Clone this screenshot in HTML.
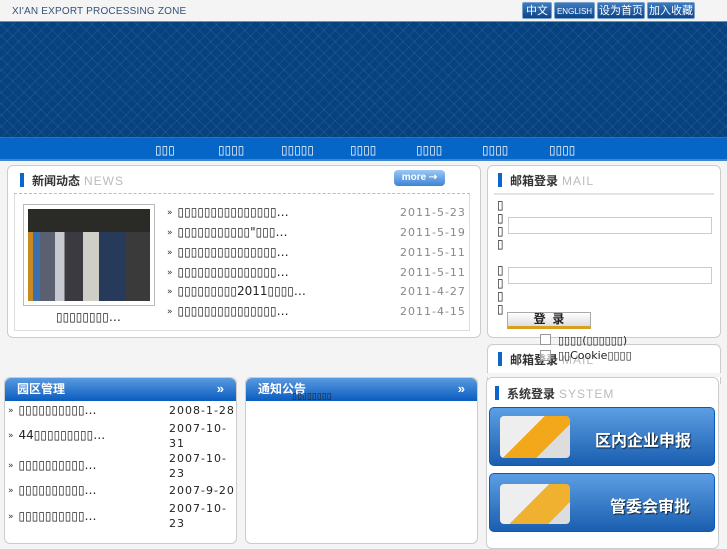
<!DOCTYPE html>
<html><head><meta charset="utf-8"><style>
*{margin:0;padding:0;box-sizing:border-box}
body{width:727px;height:545px;overflow:hidden;background:#f4f4f4;font-family:"DejaVu Sans","Liberation Sans","Noto Sans CJK SC",sans-serif;font-size:11px;color:#222;position:relative}
.a{position:absolute}
.tb{top:2px;height:17px;background:linear-gradient(#3c7ac0,#0d4488);color:#fff;font-size:11px;line-height:17px;text-align:center;border:1px solid #7aa0cc;border-radius:2px;font-family:"Liberation Sans","Noto Sans CJK SC",sans-serif}
.banner{top:21px;left:0;width:727px;height:117px;background-color:#07427f;background-image:repeating-linear-gradient(45deg,rgba(120,170,230,.12) 0 1px,transparent 1px 8px),repeating-linear-gradient(-45deg,rgba(120,170,230,.12) 0 1px,transparent 1px 8px);border-top:1px solid #6d8fb8;border-bottom:1px solid #4a6a90}
.nav{top:138px;left:0;width:727px;height:23px;background:#0566c8;border-bottom:2px solid #3f86d0}
.nav span{position:absolute;top:5px;color:#fff;font-size:12px}
.panel{background:#fff;border:1px solid #ccc;border-radius:6px}
.tt{font-weight:bold;font-size:12px;color:#333;font-family:"Liberation Sans","Noto Sans CJK SC",sans-serif}
.tt i{display:inline-block;width:4px;height:14px;background:#0a66cc;vertical-align:-2px;margin-right:8px}
.tt em{font-style:normal;font-weight:normal;color:#bbb;letter-spacing:1px;margin-left:4px}
.li{position:absolute;font-size:12px;white-space:nowrap}
.li:before{content:"»";font-size:9px;color:#333;margin-right:5px;vertical-align:1px}
.dt{position:absolute;color:#888;font-size:11px;letter-spacing:1px}
.dt2{position:absolute;color:#222;font-size:11px;letter-spacing:1px;line-height:15px}
.hd{height:23px;border-radius:6px 6px 0 0;background:linear-gradient(#5a9ae0,#0a5cc0);color:#fff;font-weight:bold;font-size:12px;line-height:22px;padding-left:12px;font-family:"Liberation Sans","Noto Sans CJK SC",sans-serif;position:relative}
.hd b{position:absolute;right:12px;top:0;font-size:13px}
.sb{left:489px;width:226px;height:59px;border-radius:5px;background:linear-gradient(#5c9ee2,#1a5fb0);border:1px solid #0a58c0;color:#fff;font-weight:bold;font-size:16px;font-family:"Liberation Sans","Noto Sans CJK SC",sans-serif;text-shadow:1px 1px 1px #123}
.inp{position:absolute;left:508px;width:204px;height:17px;border:1px solid #ccc;background:#fff}
</style></head><body>
<div class="a" style="left:12px;top:6px;font-size:10px;color:#35507a;font-family:'Liberation Sans',sans-serif;letter-spacing:.2px">XI'AN EXPORT PROCESSING ZONE</div>
<div class="a tb" style="left:522px;width:30px">中文</div>
<div class="a tb" style="left:554px;width:41px;font-size:8px">ENGLISH</div>
<div class="a tb" style="left:597px;width:48px">设为首页</div>
<div class="a tb" style="left:647px;width:48px">加入收藏</div>
<div class="a banner"></div>
<div class="a nav"><span style="left:155px">▯▯▯</span><span style="left:218px">▯▯▯▯</span><span style="left:281px">▯▯▯▯▯</span><span style="left:350px">▯▯▯▯</span><span style="left:416px">▯▯▯▯</span><span style="left:482px">▯▯▯▯</span><span style="left:549px">▯▯▯▯</span></div>

<div class="a panel" style="left:7px;top:165px;width:474px;height:173px"></div>
<div class="a tt" style="left:20px;top:172px"><i></i>新闻动态<em>NEWS</em></div>
<div class="a" style="left:394px;top:170px;width:51px;height:16px;border-radius:4px;background:linear-gradient(#9cc8f4,#3a84d4);color:#fff;font-size:10px;font-weight:bold;line-height:15px;text-align:center;font-family:'Liberation Sans',sans-serif">more ⇢</div>
<div class="a" style="left:14px;top:193px;width:456px;height:138px;border:1px solid #ddd;border-top:1px dashed #bbb;background:#fff"></div>
<div class="a" style="left:23px;top:204px;width:132px;height:102px;border:1px solid #bbb;background:#fff;padding:4px"><div style="width:100%;height:100%;background:linear-gradient(#2a2a26 0 25%,transparent 25%),linear-gradient(90deg,#c88a20 0 4%,#3a70b0 4% 10%,#5a6070 10% 22%,#c8c8d0 22% 30%,#3a3a40 30% 45%,#cfcfc8 45% 58%,#283a5a 58% 80%,#3a3a3a 80%)"></div></div>
<div class="a" style="left:56px;top:310px;font-size:12px">▯▯▯▯▯▯▯▯…</div>
<div class="li" style="left:167px;top:205px">▯▯▯▯▯▯▯▯▯▯▯▯▯▯▯…</div>
<div class="li" style="left:167px;top:225px">▯▯▯▯▯▯▯▯▯▯▯"▯▯▯…</div>
<div class="li" style="left:167px;top:245px">▯▯▯▯▯▯▯▯▯▯▯▯▯▯▯…</div>
<div class="li" style="left:167px;top:265px">▯▯▯▯▯▯▯▯▯▯▯▯▯▯▯…</div>
<div class="li" style="left:167px;top:284px">▯▯▯▯▯▯▯▯▯2011▯▯▯▯…</div>
<div class="li" style="left:167px;top:304px">▯▯▯▯▯▯▯▯▯▯▯▯▯▯▯…</div>
<div class="dt" style="left:400px;top:206px">2011-5-23</div>
<div class="dt" style="left:400px;top:226px">2011-5-19</div>
<div class="dt" style="left:400px;top:246px">2011-5-11</div>
<div class="dt" style="left:400px;top:266px">2011-5-11</div>
<div class="dt" style="left:400px;top:285px">2011-4-27</div>
<div class="dt" style="left:400px;top:305px">2011-4-15</div>

<div class="a panel" style="left:487px;top:165px;width:234px;height:173px"></div>
<div class="a tt" style="left:498px;top:172px"><i></i>邮箱登录<em>MAIL</em></div>
<div class="a" style="left:494px;top:193px;width:220px;height:2px;background:#e4e4e4"></div>
<div class="a" style="left:497px;top:199px;width:10px;line-height:13px;font-size:12px">▯<br>▯<br>▯<br>▯<br><br>▯<br>▯<br>▯<br>▯</div>
<div class="inp" style="top:217px"></div>
<div class="inp" style="top:267px"></div>
<div class="a" style="left:507px;top:312px;width:84px;height:17px;border:1px solid #aaa;background:linear-gradient(#fff,#ddd);border-bottom:3px solid #d8a020;font-weight:bold;font-size:12px;text-align:center;line-height:13px;font-family:'Liberation Sans','Noto Sans CJK SC',sans-serif">登 &nbsp;录</div>

<div class="a panel" style="left:487px;top:344px;width:234px;height:40px;border-bottom:none;border-radius:6px 6px 0 0"></div>
<div class="a tt" style="left:498px;top:351px"><i></i>邮箱登录<em>MAIL</em></div>
<div class="a" style="left:540px;top:334px;width:11px;height:11px;border:1px solid #999;background:#fff"></div>
<div class="a" style="left:558px;top:334px">▯▯▯▯(▯▯▯▯▯▯)</div>
<div class="a" style="left:540px;top:350px;width:11px;height:11px;border:1px solid #999;background:rgba(255,255,255,.6)"></div>
<div class="a" style="left:558px;top:349px">▯▯Cookie▯▯▯▯</div>

<div class="a" style="left:0;top:373px;width:727px;height:4px;background:#f4f4f4"></div>
<div class="a panel" style="left:486px;top:377px;width:233px;height:172px"></div>
<div class="a tt" style="left:495px;top:385px"><i></i>系统登录<em>SYSTEM</em></div>
<div class="a sb" style="top:407px"><div style="position:absolute;left:10px;top:8px;width:70px;height:42px;background:linear-gradient(135deg,#eee 40%,#f3a81c 40% 70%,#ddd 70%);border-radius:4px"></div><span style="position:absolute;left:105px;top:19px">区内企业申报</span></div>
<div class="a sb" style="top:473px"><div style="position:absolute;left:10px;top:10px;width:70px;height:40px;background:linear-gradient(135deg,#eee 45%,#f0b030 45% 80%,#ddd 80%);border-radius:4px"></div><span style="position:absolute;left:120px;top:19px">管委会审批</span></div>

<div class="a panel" style="left:4px;top:377px;width:233px;height:167px"><div class="hd">园区管理<b>»</b></div></div>
<div class="li" style="left:8px;top:403px">▯▯▯▯▯▯▯▯▯▯…</div>
<div class="li" style="left:8px;top:428px">44▯▯▯▯▯▯▯▯▯…</div>
<div class="li" style="left:8px;top:458px">▯▯▯▯▯▯▯▯▯▯…</div>
<div class="li" style="left:8px;top:483px">▯▯▯▯▯▯▯▯▯▯…</div>
<div class="li" style="left:8px;top:509px">▯▯▯▯▯▯▯▯▯▯…</div>
<div class="dt2" style="left:169px;top:403px">2008-1-28</div>
<div class="dt2" style="left:169px;top:421px">2007-10-<br>31</div>
<div class="dt2" style="left:169px;top:451px">2007-10-<br>23</div>
<div class="dt2" style="left:169px;top:483px">2007-9-20</div>
<div class="dt2" style="left:169px;top:501px">2007-10-<br>23</div>

<div class="a panel" style="left:245px;top:377px;width:233px;height:167px"><div class="hd">通知公告<b>»</b></div></div>
<div class="a" style="left:292px;top:393px;font-size:9px;line-height:9px;overflow:hidden;height:7px">▯▯▯▯▯▯▯▯</div>
</body></html>
